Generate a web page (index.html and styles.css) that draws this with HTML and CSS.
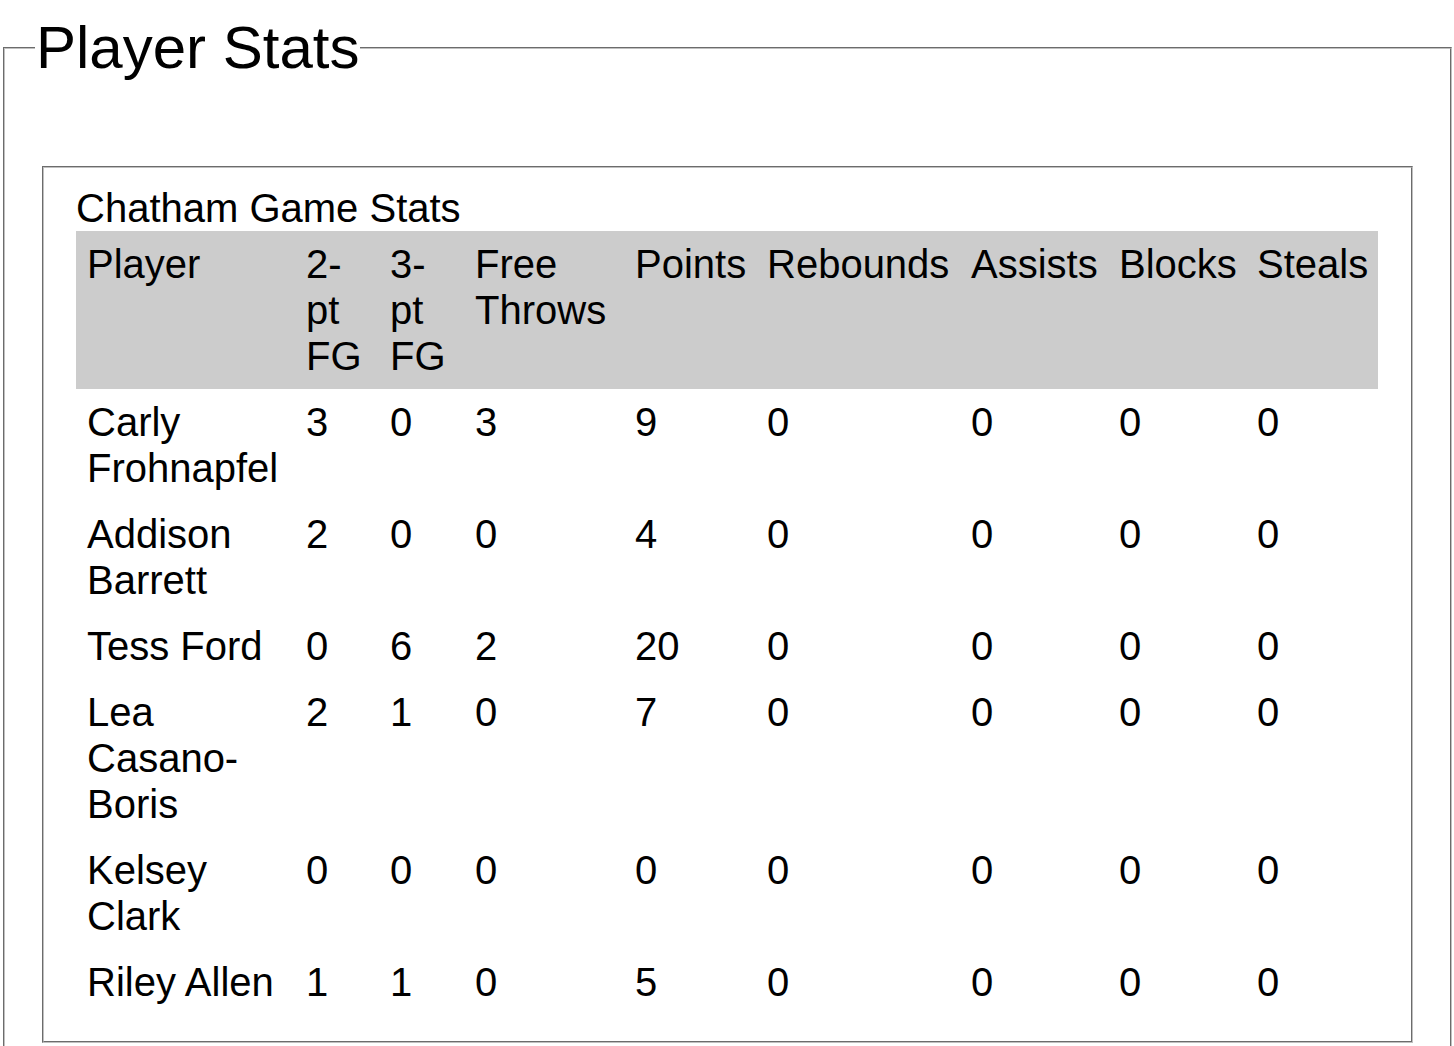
FILE: index.html
```html
<!DOCTYPE html>
<html lang="en">
<head>
<meta charset="utf-8">
<title>Player Stats</title>
<link rel="stylesheet" href="styles.css">
</head>
<body>
<fieldset class="stats-fieldset">
  <legend class="stats-legend">Player Stats</legend>
  <div class="game-box">
    <table class="stats-table">
      <caption class="stats-caption">Chatham Game Stats</caption>
      <colgroup>
        <col class="c-player">
        <col class="c-two">
        <col class="c-three">
        <col class="c-ft">
        <col class="c-pts">
        <col class="c-reb">
        <col class="c-ast">
        <col class="c-blk">
        <col class="c-stl">
      </colgroup>
      <thead>
        <tr class="head-row">
          <th>Player</th>
          <th>2-pt FG</th>
          <th>3-pt FG</th>
          <th>Free Throws</th>
          <th>Points</th>
          <th>Rebounds</th>
          <th>Assists</th>
          <th>Blocks</th>
          <th>Steals</th>
        </tr>
      </thead>
      <tbody>
        <tr><td>Carly Frohnapfel</td><td>3</td><td>0</td><td>3</td><td>9</td><td>0</td><td>0</td><td>0</td><td>0</td></tr>
        <tr><td>Addison Barrett</td><td>2</td><td>0</td><td>0</td><td>4</td><td>0</td><td>0</td><td>0</td><td>0</td></tr>
        <tr><td>Tess Ford</td><td>0</td><td>6</td><td>2</td><td>20</td><td>0</td><td>0</td><td>0</td><td>0</td></tr>
        <tr><td>Lea Casano-Boris</td><td>2</td><td>1</td><td>0</td><td>7</td><td>0</td><td>0</td><td>0</td><td>0</td></tr>
        <tr><td>Kelsey Clark</td><td>0</td><td>0</td><td>0</td><td>0</td><td>0</td><td>0</td><td>0</td><td>0</td></tr>
        <tr><td>Riley Allen</td><td>1</td><td>1</td><td>0</td><td>5</td><td>0</td><td>0</td><td>0</td><td>0</td></tr>
      </tbody>
    </table>
  </div>
</fieldset>
</body>
</html>
```

FILE: styles.css
```css
html, body {
  margin: 0;
  padding: 0;
  background: #ffffff;
}

body {
  font-family: "Liberation Sans", Arial, Helvetica, sans-serif;
  color: #000000;
}

.stats-fieldset {
  margin: 13px 2px 0 3px;
  padding: 0 37px 30px 37px;
  border: 2px groove #c0c0c0;
  min-width: 0;
}

.stats-legend {
  font-size: 60px;
  line-height: 69px;
  padding: 0 1px;
  margin-left: -7px;
}

.game-box {
  margin-top: 84px;
  border: 2px groove #c0c0c0;
  padding: 17px 33px 26px 32px;
}

.stats-table {
  width: 1302px;
  table-layout: fixed;
  border-collapse: collapse;
  font-size: 40px;
  line-height: 46px;
}

.stats-caption {
  caption-side: top;
  text-align: left;
  padding: 0;
  line-height: 46px;
}

.c-player { width: 219px; }
.c-two { width: 84px; }
.c-three { width: 85px; }
.c-ft { width: 160px; }
.c-pts { width: 132px; }
.c-reb { width: 204px; }
.c-ast { width: 148px; }
.c-blk { width: 138px; }
.c-stl { width: 132px; }

.head-row {
  background: #cccccc;
}

.stats-table th,
.stats-table td {
  padding: 10px 11px;
  text-align: left;
  vertical-align: top;
  font-weight: normal;
}
```
